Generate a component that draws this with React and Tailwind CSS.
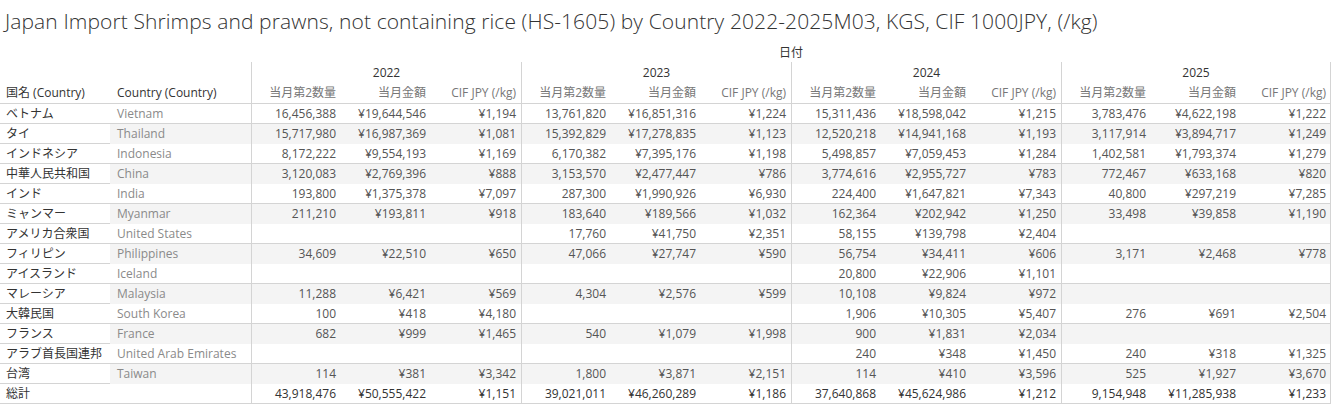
import React from "react";

const YEARS = ["2022", "2023", "2024", "2025"];
const MEASURES = ["当月第2数量", "当月金額", "CIF JPY (/kg)"];

const ROWS = [
  ["ベトナム", "Vietnam", ["16,456,388", "¥19,644,546", "¥1,194"], ["13,761,820", "¥16,851,316", "¥1,224"], ["15,311,436", "¥18,598,042", "¥1,215"], ["3,783,476", "¥4,622,198", "¥1,222"]],
  ["タイ", "Thailand", ["15,717,980", "¥16,987,369", "¥1,081"], ["15,392,829", "¥17,278,835", "¥1,123"], ["12,520,218", "¥14,941,168", "¥1,193"], ["3,117,914", "¥3,894,717", "¥1,249"]],
  ["インドネシア", "Indonesia", ["8,172,222", "¥9,554,193", "¥1,169"], ["6,170,382", "¥7,395,176", "¥1,198"], ["5,498,857", "¥7,059,453", "¥1,284"], ["1,402,581", "¥1,793,374", "¥1,279"]],
  ["中華人民共和国", "China", ["3,120,083", "¥2,769,396", "¥888"], ["3,153,570", "¥2,477,447", "¥786"], ["3,774,616", "¥2,955,727", "¥783"], ["772,467", "¥633,168", "¥820"]],
  ["インド", "India", ["193,800", "¥1,375,378", "¥7,097"], ["287,300", "¥1,990,926", "¥6,930"], ["224,400", "¥1,647,821", "¥7,343"], ["40,800", "¥297,219", "¥7,285"]],
  ["ミャンマー", "Myanmar", ["211,210", "¥193,811", "¥918"], ["183,640", "¥189,566", "¥1,032"], ["162,364", "¥202,942", "¥1,250"], ["33,498", "¥39,858", "¥1,190"]],
  ["アメリカ合衆国", "United States", null, ["17,760", "¥41,750", "¥2,351"], ["58,155", "¥139,798", "¥2,404"], null],
  ["フィリピン", "Philippines", ["34,609", "¥22,510", "¥650"], ["47,066", "¥27,747", "¥590"], ["56,754", "¥34,411", "¥606"], ["3,171", "¥2,468", "¥778"]],
  ["アイスランド", "Iceland", null, null, ["20,800", "¥22,906", "¥1,101"], null],
  ["マレーシア", "Malaysia", ["11,288", "¥6,421", "¥569"], ["4,304", "¥2,576", "¥599"], ["10,108", "¥9,824", "¥972"], null],
  ["大韓民国", "South Korea", ["100", "¥418", "¥4,180"], null, ["1,906", "¥10,305", "¥5,407"], ["276", "¥691", "¥2,504"]],
  ["フランス", "France", ["682", "¥999", "¥1,465"], ["540", "¥1,079", "¥1,998"], ["900", "¥1,831", "¥2,034"], null],
  ["アラブ首長国連邦", "United Arab Emirates", null, null, ["240", "¥348", "¥1,450"], ["240", "¥318", "¥1,325"]],
  ["台湾", "Taiwan", ["114", "¥381", "¥3,342"], ["1,800", "¥3,871", "¥2,151"], ["114", "¥410", "¥3,596"], ["525", "¥1,927", "¥3,670"]],
];

const TOTAL = [
  ["43,918,476", "¥50,555,422", "¥1,151"],
  ["39,021,011", "¥46,260,289", "¥1,186"],
  ["37,640,868", "¥45,624,986", "¥1,212"],
  ["9,154,948", "¥11,285,938", "¥1,233"],
];

const FONT = "font-['Open_Sans','Noto_Sans_CJK_JP',sans-serif]";

function YearGroup({ values, last, banded, strong }) {
  const vals = values || ["", "", ""];
  return (
    <div
      className={`grid grid-cols-[89px_90px_90px] border-l border-[#d4d4d4] ${last ? "border-r" : ""} ${
        banded ? "bg-[#f4f4f4]" : ""
      }`}
    >
      {vals.map((v, i) => (
        <div
          key={i}
          className={`pr-[5px] text-right leading-[20px] ${strong ? "text-[#333]" : "text-[#555]"}`}
        >
          {v}
        </div>
      ))}
    </div>
  );
}

function Row({ name, en, groups, banded, strong }) {
  return (
    <div className="grid grid-cols-[110px_141px_270px_270px_270px_270px] h-[20px] border-b border-[#d4d4d4]">
      <div className="pl-[6px] leading-[20px] text-[#333] whitespace-nowrap">{name}</div>
      <div className={`pl-[7px] leading-[20px] text-[#8a8a8a] whitespace-nowrap ${banded ? "bg-[#f4f4f4]" : ""}`}>
        {en}
      </div>
      {groups.map((g, i) => (
        <YearGroup key={i} values={g} last={i === 3} banded={banded} strong={strong} />
      ))}
    </div>
  );
}

export default function App() {
  return (
    <div className={`w-[1333px] h-[404px] bg-white overflow-hidden text-[12px] ${FONT}`}>
      <h1 className="h-[44px] pl-[5px] pt-[7px] text-[21px] leading-[28px] tracking-[0.1px] font-light text-[#333] whitespace-nowrap">
        Japan Import Shrimps and prawns, not containing rice (HS-1605) by Country 2022-2025M03, KGS, CIF 1000JPY, (/kg)
      </h1>

      <div className="w-[1331px]">
        {/* 日付 caption */}
        <div className="grid grid-cols-[251px_1080px] h-[18px]">
          <div />
          <div className="text-center leading-[18px] text-[#333]">日付</div>
        </div>

        {/* Years */}
        <div className="grid grid-cols-[251px_270px_270px_270px_270px] h-[21px]">
          <div />
          {YEARS.map((y, i) => (
            <div
              key={y}
              className={`border-l border-[#d4d4d4] ${i === 3 ? "border-r" : ""} text-center leading-[22px] text-[#333]`}
            >
              {y}
            </div>
          ))}
        </div>

        {/* Measure headers */}
        <div className="grid grid-cols-[110px_141px_270px_270px_270px_270px] h-[21px] border-b border-[#d4d4d4]">
          <div className="pl-[6px] leading-[20px] text-[#333] whitespace-nowrap">国名 (Country)</div>
          <div className="pl-[7px] leading-[20px] text-[#333] whitespace-nowrap">Country (Country)</div>
          {YEARS.map((y, i) => (
            <div
              key={y}
              className={`grid grid-cols-[89px_90px_90px] border-l border-[#d4d4d4] ${i === 3 ? "border-r" : ""}`}
            >
              {MEASURES.map((m) => (
                <div key={m} className="pr-[5px] text-right leading-[20px] text-[#777] whitespace-nowrap">
                  {m}
                </div>
              ))}
            </div>
          ))}
        </div>

        {ROWS.map((r, i) => (
          <Row key={r[0]} name={r[0]} en={r[1]} groups={r.slice(2)} banded={i % 2 === 1} />
        ))}
        <Row name="総計" en="" groups={TOTAL} banded={false} strong />
      </div>
    </div>
  );
}
